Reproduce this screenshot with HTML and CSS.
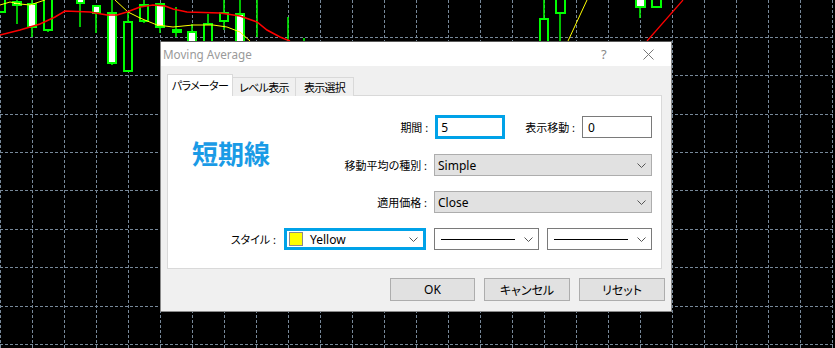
FILE: index.html
```html
<!DOCTYPE html>
<html>
<head>
    <title>Moving Average</title>
    <link rel="stylesheet" href="styles.css">
</head>
<body>
    <div class="chart">
        <svg class="chart-svg" width="835" height="348" viewBox="0 0 835 348">
            <rect x="0" y="0" width="835" height="348" fill="#000"/>
            <g stroke="#778899" stroke-width="1" stroke-dasharray="3 2" shape-rendering="crispEdges">
                <path d="M0.5 0V348M32.5 0V348M64.5 0V348M96.5 0V348M128.5 0V348M160.5 0V348M192.5 0V348M224.5 0V348M256.5 0V348M288.5 0V348M320.5 0V348M352.5 0V348M384.5 0V348M416.5 0V348M448.5 0V348M480.5 0V348M512.5 0V348M544.5 0V348M576.5 0V348M608.5 0V348M640.5 0V348M672.5 0V348M704.5 0V348M736.5 0V348M768.5 0V348M800.5 0V348M832.5 0V348"/>
                <path d="M0 37.5H835M0 75.5H835M0 114.5H835M0 152.5H835M0 190.5H835M0 229.5H835M0 267.5H835M0 306.5H835M0 344.5H835"/>
            </g>
            <!-- wicks -->
            <g stroke="#00ff00" stroke-width="1.5">
                <path d="M17 0V24M32 0V37M48 0V32M80 3V27M96 13V33M112 0V65M128 11V21M144 0V23M160 27V33M176 7V37M192 24V41M208 14V41M224 0V30M240 0V41M257 0V37M288 17V41M304 38V41M544 0V41M560 0V41M640 0V18M656 0V7"/>
            </g>
            <!-- candle bodies -->
            <g stroke="#00ff00" stroke-width="2">
                <rect x="-2" y="-2" width="7" height="14" fill="#000"/>
                <rect x="13" y="2" width="8" height="3" fill="#fff"/>
                <rect x="28" y="4" width="8" height="23" fill="#fff"/>
                <rect x="44" y="-2" width="8" height="32" fill="#000"/>
                <rect x="77" y="-2" width="7" height="5" fill="#fff"/>
                <rect x="93" y="6" width="7" height="7" fill="#fff"/>
                <rect x="108" y="13" width="8" height="50" fill="#fff"/>
                <rect x="124" y="22" width="8" height="49" fill="#000"/>
                <rect x="140" y="5" width="8" height="16" fill="#000"/>
                <rect x="156" y="4" width="8" height="23" fill="#fff"/>
                <rect x="173" y="30" width="8" height="2" fill="#fff"/>
                <rect x="188" y="32" width="8" height="12" fill="#fff"/>
                <rect x="204" y="24" width="8" height="20" fill="#000"/>
                <rect x="220" y="13" width="8" height="8" fill="#000"/>
                <rect x="236" y="14" width="8" height="28" fill="#fff"/>
                <rect x="540" y="19" width="8" height="25" fill="#000"/>
                <rect x="556" y="-2" width="9" height="15" fill="#000"/>
                <rect x="636" y="-2" width="9" height="9" fill="#fff"/>
                <rect x="652" y="-2" width="9" height="9" fill="#000"/>
            </g>
            <polyline fill="none" stroke="#ffff00" stroke-width="1" points="0,5 10,2 20,4 30,5 45,0"/>
            <polyline fill="none" stroke="#ffff00" stroke-width="1" points="115,0 128,12 140,18 157,25 173,27 193,25 213,25 227,27 240,32 250,41"/>
            <polyline fill="none" stroke="#ffff00" stroke-width="1" points="568,41 587,0"/>
            <polyline fill="none" stroke="#ff0000" stroke-width="1.5" points="0,35 20,30 40,24 55,17 65,11 90,12 107,15 117,15 127,12 140,7 153,5 165,6 173,9 187,12 220,13 240,16 257,22 267,30 280,37 290,41"/>
            <polyline fill="none" stroke="#ff0000" stroke-width="1.2" points="647,41 683,0"/>
        </svg>
    </div>

    <div class="dialog">
        <div class="titlebar">
            <span class="title">Moving Average</span>
            <span class="help">?</span>
            <span class="close">
                <svg width="11" height="11" viewBox="0 0 11 11"><path d="M0.5 0.5L10.5 10.5M10.5 0.5L0.5 10.5" stroke="#777" stroke-width="1" fill="none"/></svg>
            </span>
        </div>

        <div class="tabs">
            <div class="tab active tab-params">パラメーター</div>
            <div class="tab tab-levels">レベル表示</div>
            <div class="tab tab-visual">表示選択</div>
        </div>

        <div class="panel">
            <div class="caption">短期線</div>

            <div class="row">
                <label>期間 :</label>
                <div class="field text focus w-period">5</div>
                <label class="gap-left">表示移動 :</label>
                <div class="field text w-shift">0</div>
            </div>

            <div class="row">
                <label>移動平均の種別 :</label>
                <div class="field select w-wide">
                    <span>Simple</span>
                    <svg class="chev" width="9" height="5" viewBox="0 0 9 5"><path d="M0.5 0.5L4.5 4.5L8.5 0.5" stroke="#555" fill="none"/></svg>
                </div>
            </div>

            <div class="row">
                <label>適用価格 :</label>
                <div class="field select w-wide">
                    <span>Close</span>
                    <svg class="chev" width="9" height="5" viewBox="0 0 9 5"><path d="M0.5 0.5L4.5 4.5L8.5 0.5" stroke="#555" fill="none"/></svg>
                </div>
            </div>

            <div class="row row-style">
                <label>スタイル :</label>
                <div class="field combo focus w-color">
                    <span class="swatch"></span>
                    <span>Yellow</span>
                    <svg class="chev" width="9" height="5" viewBox="0 0 9 5"><path d="M0.5 0.5L4.5 4.5L8.5 0.5" stroke="#555" fill="none"/></svg>
                </div>
                <div class="field combo w-line">
                    <span class="line-sample"></span>
                    <svg class="chev" width="9" height="5" viewBox="0 0 9 5"><path d="M0.5 0.5L4.5 4.5L8.5 0.5" stroke="#555" fill="none"/></svg>
                </div>
                <div class="field combo w-line">
                    <span class="line-sample"></span>
                    <svg class="chev" width="9" height="5" viewBox="0 0 9 5"><path d="M0.5 0.5L4.5 4.5L8.5 0.5" stroke="#555" fill="none"/></svg>
                </div>
            </div>
        </div>

        <div class="footer">
            <button class="btn btn-ok">OK</button>
            <button class="btn">キャンセル</button>
            <button class="btn">リセット</button>
        </div>
    </div>
</body>
</html>
```

FILE: styles.css
```css
body {
    margin: 0;
    background: #000;
    overflow: hidden;
    font-family: "Noto Sans", "Noto Sans CJK JP", sans-serif;
    font-size: 12px;
    color: #000;
}
.chart {
    width: 835px;
    height: 348px;
}
.chart-svg {
    display: block;
}
.dialog {
    position: absolute;
    left: 160px;
    top: 41px;
    width: 512px;
    height: 271px;
    box-sizing: border-box;
    background: #f0f0f0;
    border: 1px solid #8a8a8a;
    border-top-color: #5a5a5a;
    display: flex;
    flex-direction: column;
}
.titlebar {
    height: 24px;
    background: #fff;
    display: flex;
    align-items: center;
    padding-left: 2px;
    color: #9a9a9a;
}
.title {
    flex: 1;
    font-size: 11.7px;
}
.help {
    width: 14px;
    font-size: 13px;
    color: #888;
    margin-right: 28px;
}
.close {
    width: 11px;
    height: 11px;
    margin-right: 17px;
    display: flex;
}
.tabs {
    display: flex;
    align-items: flex-end;
    padding: 8px 0 0 6px;
    font-size: 11px;
    font-feature-settings: "palt";
    letter-spacing: -0.7px;
    margin-bottom: -1px;
    position: relative;
}
.tab {
    height: 19px;
    line-height: 19px;
    text-align: center;
    box-sizing: border-box;
    border: 1px solid #d9d9d9;
    border-bottom: none;
    border-left: none;
    background: #f0f0f0;
}
.tab.active {
    height: 22px;
    line-height: 22px;
    background: #fff;
    border-left: 1px solid #d9d9d9;
}
.tab-params { width: 66px; }
.tab-levels { width: 63px; }
.tab-visual { width: 58px; }
.panel {
    margin: 0 9px 0 6px;
    height: 174px;
    box-sizing: border-box;
    background: #fff;
    border: 1px solid #d9d9d9;
    display: grid;
    grid-template-columns: 1fr auto;
    row-gap: 15px;
    align-content: start;
    padding: 19px 9px 0 24px;
}
.caption {
    grid-column: 1;
    grid-row: 1 / 3;
    align-self: center;
    padding-top: 13px;
    font-size: 26px;
    font-weight: 700;
    color: #1a9be6;
    font-family: "Noto Sans CJK JP", sans-serif;
}
.row {
    grid-column: 2;
    display: flex;
    align-items: center;
    justify-content: flex-end;
}
.row-style {
    grid-column: 1 / 3;
    gap: 8px;
}
.row label {
    font-size: 11px;
    font-feature-settings: "palt";
    margin-right: 7px;
    white-space: nowrap;
}
.row-style label {
    margin-right: 0;
}
.row label.gap-left {
    margin-left: 20px;
}
.field {
    box-sizing: border-box;
    height: 22px;
    display: flex;
    align-items: center;
    padding-left: 5px;
}
.field.text {
    background: #fff;
    border: 1px solid #7a7a7a;
    height: 22px;
}
.field.select {
    background: #e1e1e1;
    border: 1px solid #adadad;
    padding-left: 3px;
}
.field.combo {
    background: #fff;
    border: 1px solid #7a7a7a;
}
.field.focus {
    border: 3px solid #00a2e8;
    padding-left: 2px;
}
.field.text.focus {
    height: 24px;
    padding-left: 3px;
}
.chev {
    margin-left: auto;
    margin-right: 5px;
}
.w-period { width: 70px; }
.w-shift { width: 70px; }
.w-wide { width: 218px; }
.w-color { width: 142px; }
.w-line { width: 105px; padding-left: 6px; }
.swatch {
    width: 12px;
    height: 12px;
    background: #ffff00;
    border: 1px solid #8a8a8a;
    margin-right: 7px;
}
.line-sample {
    width: 74px;
    height: 1px;
    background: #000;
}
.footer {
    display: flex;
    justify-content: flex-end;
    gap: 9px;
    padding: 9px 6px 0 0;
}
.btn {
    width: 86px;
    height: 23px;
    box-sizing: border-box;
    background: #e1e1e1;
    border: 1px solid #adadad;
    font-family: "Noto Sans", "Noto Sans CJK JP", sans-serif;
    font-size: 12px;
    font-feature-settings: "palt";
    color: #000;
    padding: 0;
}
.btn-ok {
    width: 85px;
}
```
